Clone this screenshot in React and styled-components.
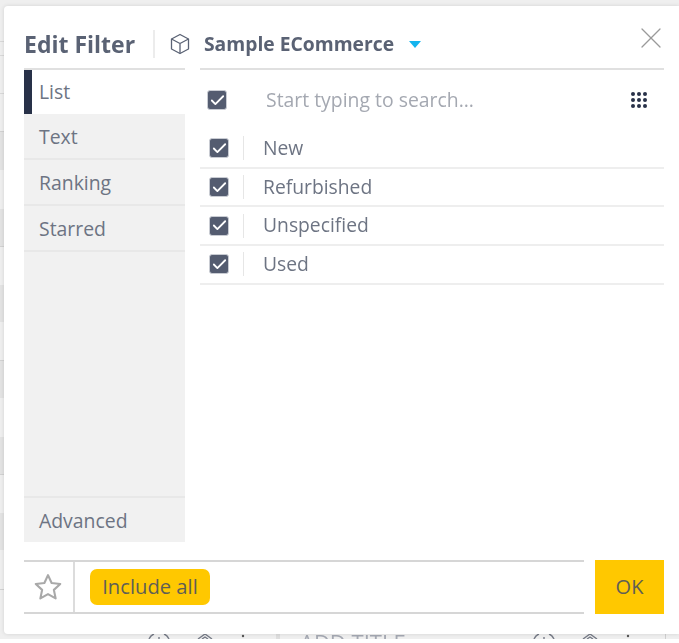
import React from "react";
import styled, { createGlobalStyle } from "styled-components";
import { Check, X } from "lucide-react";

const Global = createGlobalStyle`
  html, body { margin: 0; padding: 0; background: #fff; }
  * { box-sizing: border-box; }
  body { font-family: "Open Sans", "Liberation Sans", sans-serif; }
`;

const Page = styled.div`
  position: relative;
  width: 679px;
  height: 639px;
  overflow: hidden;
  background: #efefef;
`;

/* The dimmed dashboard that shows behind the dialog */
const BackdropEdge = styled.div`
  position: absolute;
  left: 0;
  top: 0;
  width: 4px;
  display: flex;
  flex-direction: column;
  filter: blur(0.4px);
`;

const EdgeBand = styled.div`
  height: ${(p) => p.$h}px;
  background: ${(p) => p.$bg};
`;

const BackdropStrip = styled.div`
  position: absolute;
  left: 0;
  right: 0;
  top: 634px;
  height: 5px;
  overflow: hidden;
  filter: blur(0.4px);
`;

const StripIcon = styled.svg`
  position: absolute;
  top: 0;
  left: ${(p) => p.$x}px;
  width: 26px;
  height: 5px;
  fill: none;
  stroke: #777c88;
  stroke-width: 1.4;
`;

const StripTitle = styled.div`
  position: absolute;
  left: 300px;
  top: -5px;
  font-size: 22px;
  line-height: 26px;
  color: #a5a9b3;
  white-space: nowrap;
`;

const StripBlock = styled.div`
  position: absolute;
  left: ${(p) => p.$x}px;
  top: 0;
  width: ${(p) => p.$w}px;
  height: 5px;
  background: ${(p) => p.$bg};
`;

const Modal = styled.div`
  position: absolute;
  left: 4px;
  top: 6px;
  width: 675px;
  height: 628px;
  padding: 24px 15px 20px 20px;
  background: #fff;
  border-radius: 4px 0 0 4px;
  box-shadow: 0 0 4px rgba(0, 0, 0, 0.12);
  display: flex;
  flex-direction: column;
  filter: blur(0.45px);
`;

const Header = styled.header`
  height: 38px;
  padding-bottom: 10px;
  display: flex;
  align-items: center;
  position: relative;
  flex: none;
`;

const Title = styled.h1`
  margin: 0;
  width: 131px;
  height: 28px;
  font-size: 23px;
  line-height: 28px;
  font-weight: 700;
  color: #5a6274;
  border-right: 2px solid #ececec;
  flex: none;
  white-space: nowrap;
`;

const CubeIcon = styled.svg`
  margin-left: 14px;
  width: 22px;
  height: 22px;
  flex: none;
  fill: none;
  stroke: #5a6274;
  stroke-width: 1.3;
  stroke-linejoin: round;
`;

const Source = styled.span`
  margin-left: 13px;
  margin-bottom: 2px;
  font-size: 19.3px;
  font-weight: 700;
  color: #5a6274;
  white-space: nowrap;
`;

const Caret = styled.span`
  margin-left: 15px;
  width: 0;
  height: 0;
  border-left: 6.5px solid transparent;
  border-right: 6.5px solid transparent;
  border-top: 7px solid #15b4ee;
`;

const CloseButton = styled.button`
  position: absolute;
  right: -5px;
  top: -10px;
  width: 36px;
  height: 36px;
  padding: 0;
  border: 0;
  background: none;
  color: #9a9a9a;
  display: flex;
  align-items: center;
  justify-content: center;
`;

const Body = styled.div`
  flex: 1;
  display: flex;
  gap: 15px;
  min-height: 0;
`;

const Sidebar = styled.nav`
  width: 161px;
  flex: none;
  display: flex;
  flex-direction: column;
  background: #f1f1f1;
  border-top: 2px solid #e0e0e0;
`;

const Tab = styled.div`
  height: ${(p) => (p.$active ? "44px" : "46px")};
  display: flex;
  align-items: center;
  font-size: 19.4px;
  color: #6d7483;
  background: ${(p) => (p.$active ? "#fff" : "transparent")};
  border-left: ${(p) => (p.$active ? "8px solid #283148" : "0")};
  padding-left: ${(p) => (p.$active ? "7px" : "15px")};
  padding-bottom: ${(p) => (p.$active ? "2px" : "0")};
  border-bottom: ${(p) => (p.$active ? "0" : "2px solid #e8e8e8")};
`;

const TabSpacer = styled.div`
  flex: 1;
  border-bottom: 2px solid #e8e8e8;
`;

const AdvancedTab = styled(Tab)`
  border-bottom: 0;
  height: 44px;
`;

const Main = styled.main`
  flex: 1;
  min-width: 0;
  border-top: 2px solid #e0e0e0;
`;

const SearchRow = styled.div`
  height: 60px;
  padding: 0 16px 0 7px;
  display: flex;
  align-items: center;
`;

const Placeholder = styled.div`
  flex: 1;
  margin-left: 39px;
  margin-bottom: 2px;
  font-size: 19.4px;
  color: #a4a8b1;
`;

const CheckBox = styled.span`
  width: 20px;
  height: 20px;
  border-radius: 3px;
  background: #545c70;
  border: 1px solid #c9ccd3;
  color: #fff;
  display: flex;
  align-items: center;
  justify-content: center;
  flex: none;
`;

const GridIcon = styled.svg`
  width: 18px;
  height: 16px;
  fill: #283148;
`;

const Row = styled.div`
  height: 38.7px;
  padding-left: 9px;
  display: flex;
  align-items: center;
  border-bottom: 2px solid #eeeeee;
`;

const RowDivider = styled.span`
  width: 1px;
  height: 24px;
  margin-left: 14px;
  background: #e6e6e6;
  flex: none;
`;

const RowLabel = styled.span`
  margin-left: 19px;
  margin-bottom: 2px;
  font-size: 19.3px;
  color: #6d7483;
`;

const Footer = styled.footer`
  margin-top: 18px;
  height: 54px;
  display: flex;
  flex: none;
  gap: 11px;
`;

const FooterBar = styled.div`
  flex: 1;
  display: flex;
  align-items: center;
  border-top: 2px solid #d6d6d6;
  border-bottom: 2px solid #d6d6d6;
`;

const StarCell = styled.div`
  width: 51px;
  align-self: stretch;
  padding-right: 2px;
  border-right: 2px solid #dcdcdc;
  display: flex;
  align-items: center;
  justify-content: center;
  flex: none;
`;

const StarIcon = styled.svg`
  width: 30px;
  height: 30px;
  fill: none;
  stroke: #a9a9a9;
  stroke-width: 1.7;
  stroke-linejoin: round;
`;

const Pill = styled.span`
  margin-left: 15px;
  width: 120px;
  height: 36px;
  padding-bottom: 2px;
  border-radius: 7px;
  background: #ffc800;
  color: #5f5f55;
  font-size: 20.2px;
  display: flex;
  align-items: center;
  justify-content: center;
`;

const OkButton = styled.button`
  width: 69px;
  flex: none;
  border: 0;
  padding: 0 0 2px;
  background: #ffc800;
  color: #5f5f55;
  font-family: inherit;
  font-size: 20px;
`;

const tick = <Check size={17} strokeWidth={2.6} />;
const rows = ["New", "Refurbished", "Unspecified", "Used"];

const edgeBands = [
  [41, "#efefef"], [1, "#d9d9d9"], [13, "#efefef"], [1, "#d9d9d9"], [37, "#efefef"], [1, "#d9d9d9"],
  [37, "#efefef"], [1, "#d2d2d2"], [38, "#e3e3e3"], [39, "#efefef"], [37, "#e3e3e3"], [1, "#d2d2d2"],
  [38, "#efefef"], [37, "#e3e3e3"], [38, "#efefef"], [1, "#d2d2d2"], [37, "#e3e3e3"], [39, "#efefef"],
  [37, "#e3e3e3"], [1, "#d2d2d2"], [38, "#efefef"], [37, "#e3e3e3"], [39, "#efefef"], [1, "#d2d2d2"],
  [50, "#efefef"],
];

const ArcIcon = ({ x }) => (
  <StripIcon $x={x} viewBox="0 0 26 5">
    <path d="M3 5Q5 1 8 0M23 5Q21 1 18 0M13 3v2" />
  </StripIcon>
);

const ChevronIcon = ({ x }) => (
  <StripIcon $x={x} viewBox="0 0 26 5">
    <path d="M6 5 13 0l7 5M10 5l3-2 3 2" />
  </StripIcon>
);

const DotIcon = ({ x }) => (
  <StripIcon $x={x} viewBox="0 0 26 5">
    <circle cx="13" cy="2" r="1.2" fill="#555" stroke="none" />
  </StripIcon>
);

export default function App() {
  return (
    <Page>
      <Global />
      <BackdropEdge>
        {edgeBands.map(([h, bg], i) => (
          <EdgeBand key={i} $h={h} $bg={bg} />
        ))}
      </BackdropEdge>
      <BackdropStrip>
        <ArcIcon x={146} />
        <ChevronIcon x={192} />
        <DotIcon x={230} />
        <StripBlock $x={276} $w={4} $bg="#dedede" />
        <StripTitle>ADD TITLE</StripTitle>
        <ArcIcon x={531} />
        <ChevronIcon x={577} />
        <DotIcon x={615} />
        <StripBlock $x={665} $w={1} $bg="#cfcfcf" />
      </BackdropStrip>
      <Modal>
        <Header>
          <Title>Edit Filter</Title>
          <CubeIcon viewBox="0 0 22 22">
            <path d="M11 1.5 19.5 6v10L11 20.5 2.5 16V6z" />
            <path d="M2.5 6 11 10.5 19.5 6M11 10.5v10" />
          </CubeIcon>
          <Source>Sample ECommerce</Source>
          <Caret />
          <CloseButton aria-label="Close">
            <X size={36} strokeWidth={0.85} />
          </CloseButton>
        </Header>
        <Body>
          <Sidebar>
            <Tab $active>List</Tab>
            <Tab>Text</Tab>
            <Tab>Ranking</Tab>
            <Tab>Starred</Tab>
            <TabSpacer />
            <AdvancedTab>Advanced</AdvancedTab>
          </Sidebar>
          <Main>
            <SearchRow>
              <CheckBox>{tick}</CheckBox>
              <Placeholder>Start typing to search...</Placeholder>
              <GridIcon viewBox="0 0 18 16">
                {[2, 8, 14].flatMap((y) =>
                  [3, 9, 15].map((x) => <circle key={`${x}-${y}`} cx={x} cy={y} r="2" />)
                )}
              </GridIcon>
            </SearchRow>
            {rows.map((r) => (
              <Row key={r}>
                <CheckBox>{tick}</CheckBox>
                <RowDivider />
                <RowLabel>{r}</RowLabel>
              </Row>
            ))}
          </Main>
        </Body>
        <Footer>
          <FooterBar>
            <StarCell>
              <StarIcon viewBox="0 0 24 24">
                <path d="M12 2.5l2.9 6.3 6.9.8-5.1 4.7 1.4 6.8-6.1-3.4-6.1 3.4 1.4-6.8-5.1-4.7 6.9-.8z" />
              </StarIcon>
            </StarCell>
            <Pill>Include all</Pill>
          </FooterBar>
          <OkButton>OK</OkButton>
        </Footer>
      </Modal>
    </Page>
  );
}
